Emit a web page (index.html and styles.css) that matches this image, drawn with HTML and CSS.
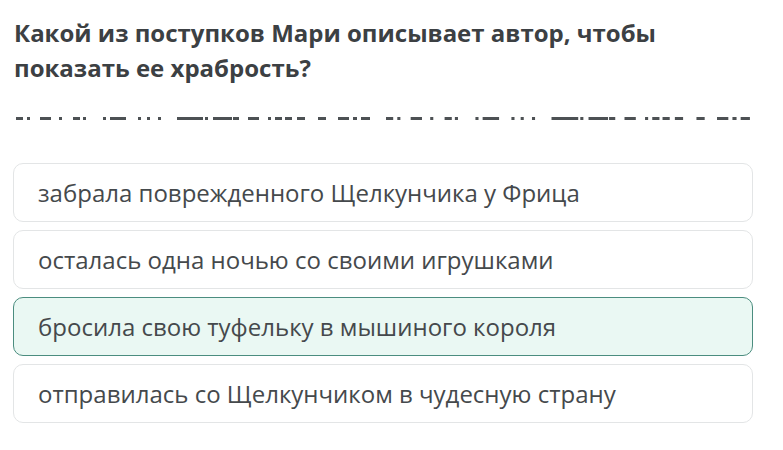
FILE: index.html
```html
<!DOCTYPE html>
<html lang="ru">
<head>
<meta charset="utf-8">
<link rel="stylesheet" href="styles.css">
</head>
<body>
<div class="page">
  <h1 class="question">Какой из поступков Мари описывает автор, чтобы показать ее храбрость?</h1>
  <div class="redacted">
    <svg width="740" height="6" viewBox="0 0 740 6" xmlns="http://www.w3.org/2000/svg">
      <defs>
        <g id="pat" fill="#4d5154">
          <rect x="0" y="1" width="7" height="3"/>
          <rect x="11" y="1" width="3" height="3"/>
          <rect x="24" y="1" width="11" height="3"/>
          <rect x="43" y="1" width="3" height="3"/>
          <rect x="57" y="1" width="7" height="3"/>
          <rect x="67" y="1" width="3" height="3"/>
          <rect x="87" y="1" width="3" height="3"/>
          <rect x="94" y="1" width="16" height="3"/>
          <rect x="122" y="1" width="3" height="3"/>
          <rect x="131" y="1" width="3" height="3"/>
          <rect x="142" y="1" width="3" height="3"/>
          <rect x="161" y="1" width="26" height="3"/>
          <rect x="189" y="1" width="3" height="3"/>
          <rect x="197" y="1" width="19" height="3"/>
          <rect x="217" y="1" width="6" height="3"/>
          <rect x="232" y="1" width="11" height="3"/>
          <rect x="252" y="1" width="3" height="3"/>
          <rect x="259" y="1" width="7" height="3"/>
          <rect x="269" y="1" width="7" height="3"/>
          <rect x="281" y="1" width="8" height="3"/>
          <rect x="302" y="1" width="8" height="3"/>
          <rect x="322" y="1" width="11" height="3"/>
          <rect x="337" y="1" width="4" height="3"/>
          <rect x="345" y="1" width="9" height="3"/>
        </g>
      </defs>
      <use href="#pat" transform="translate(3 0)"/>
      <use href="#pat" transform="translate(373 0) scale(1.028 1)"/>
    </svg>
  </div>
  <div class="options">
    <div class="option">забрала поврежденного Щелкунчика у Фрица</div>
    <div class="option">осталась одна ночью со своими игрушками</div>
    <div class="option selected">бросила свою туфельку в мышиного короля</div>
    <div class="option">отправилась со Щелкунчиком в чудесную страну</div>
  </div>
</div>
</body>
</html>
```

FILE: styles.css
```css
html, body {
  margin: 0;
  padding: 0;
  background: #ffffff;
}

body {
  font-family: "Open Sans", "Noto Sans", sans-serif;
  color: #3c4043;
}

.page {
  padding: 15px 30px 0 13px;
  display: flex;
  flex-direction: column;
}

.question {
  margin: 0;
  padding-left: 1px;
  font-size: 24px;
  font-weight: 700;
  line-height: 35px;
  color: #3c4043;
}

.redacted {
  margin-top: 31px;
  height: 6px;
  display: flex;
}

.redacted svg {
  display: block;
}

.options {
  margin-top: 41px;
  display: flex;
  flex-direction: column;
  gap: 8px;
}

.option {
  height: 59px;
  box-sizing: border-box;
  border: 1px solid #e3e5e6;
  border-radius: 10px;
  padding: 0 24px;
  display: flex;
  align-items: center;
  font-size: 24px;
  color: #45494c;
  background: #ffffff;
}

.option.selected {
  background: #eaf8f3;
  border-color: #4b8d7f;
}
```
